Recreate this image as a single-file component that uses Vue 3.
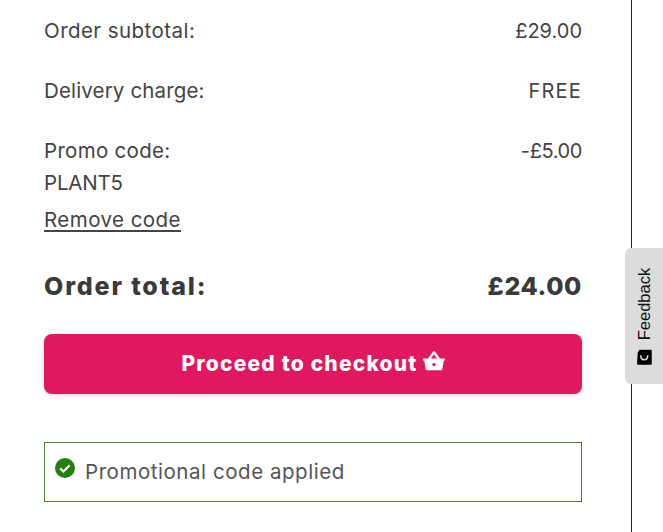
<template>
  <div class="page">
    <main class="panel">
      <div class="row first"><span class="label subtotal">Order subtotal:</span><span class="amount">£29.00</span></div>
      <div class="row"><span class="label delivery">Delivery charge:</span><span class="amount free">FREE</span></div>
      <div class="row promo">
        <div class="promo-info">
          <span class="label">Promo code:</span>
          <span class="code">PLANT5</span>
          <a class="label remove">Remove code</a>
        </div>
        <span class="amount discount">-£5.00</span>
      </div>
      <div class="row total"><span class="total-label">Order total:</span><span class="total-amount">£24.00</span></div>
      <button class="checkout">
        Proceed to checkout
        <svg class="basket" viewBox="0 0 22 20" width="22" height="20">
          <path fill="#fff" d="M0.8 7.6h4.3L9.7 0.9c.6-.9 2-.9 2.6 0l4.6 6.7h4.3c.5 0 .8.4.7.9l-.5 1.3c-.1.3-.4.5-.7.5h-.1l-1.2 7.5c-.1.9-.8 1.5-1.7 1.5H4.3c-.9 0-1.6-.6-1.7-1.5L1.4 10.4h-.1c-.3 0-.6-.2-.7-.5l-.5-1.3c-.1-.5.2-1 .7-1zM8 7.6h6L11 3.2z"/>
          <circle cx="11" cy="13.6" r="1.7" fill="#e0185f"/>
        </svg>
      </button>
      <div class="alert">
        <svg class="check" viewBox="0 0 20 20" width="20" height="20">
          <circle cx="10" cy="10" r="10" fill="#238010"/>
          <path d="M5.2 10.4l3.2 3.1 6.3-6.3" fill="none" stroke="#fff" stroke-width="2.2"/>
        </svg>
        <span>Promotional code applied</span>
      </div>
    </main>
    <aside class="feedback">
      <span class="feedback-inner">
        <svg class="fb-icon" viewBox="0 0 16 16" width="16" height="16">
          <path fill="#000" d="M3 0.5h12.5v13.7c0 .7-.6 1.3-1.3 1.3H2c-.7 0-1.2-.6-1.2-1.3L1.5 3.5z"/>
          <path d="M4.5 6c0 6 7 6 7 0" fill="none" stroke="#ddd" stroke-width="1.5"/>
        </svg>
        <span>Feedback</span>
      </span>
    </aside>
  </div>
</template>

<script setup>
</script>

<style>
html, body { margin: 0; background: #fff; }
</style>

<style scoped>
.page {
  position: relative;
  width: 663px;
  height: 532px;
  overflow: hidden;
  background: #fff;
  font-family: "Inter", "Noto Sans", sans-serif;
  color: #444;
}
.panel {
  box-sizing: border-box;
  width: 632px;
  height: 532px;
  padding: 0 49px 0 44px;
  border-right: 1px solid #222;
  font-size: 20.5px;
  line-height: 30px;
}
.row {
  display: flex;
  justify-content: space-between;
  margin-bottom: 30px;
}
.row.first { padding-top: 16px; }
.row.promo { margin-bottom: 0; }
.label { letter-spacing: .3px; }
.subtotal { letter-spacing: .45px; }
.delivery { letter-spacing: .15px; }
.amount { font-size: 20px; }
.free { letter-spacing: 1.2px; }
.discount { letter-spacing: -.4px; }
.promo-info { display: flex; flex-direction: column; }
.code { margin-top: 2px; letter-spacing: -.2px; }
.remove { margin-top: 7px; letter-spacing: .45px; text-decoration: underline; text-underline-offset: 3px; }
.row.total {
  margin: 36px 0 33px;
  font-size: 25px;
  font-weight: 800;
  color: #3a3a3a;
}
.total-label { letter-spacing: 1.85px; }
.total-amount { letter-spacing: .6px; }
.checkout {
  display: flex;
  align-items: center;
  justify-content: center;
  gap: 5px;
  box-sizing: border-box;
  width: 100%;
  height: 60px;
  padding: 0 0 2px;
  border: 0;
  border-radius: 8px;
  background: #e0185f;
  box-shadow: 0 1px 3px rgba(0,0,0,.2);
  color: #fff;
  font: 800 21px "Inter", sans-serif;
  letter-spacing: 1.2px;
}
.basket { margin-bottom: 4px; }
.alert {
  display: flex;
  align-items: center;
  gap: 10px;
  box-sizing: border-box;
  height: 60px;
  margin-top: 48px;
  padding-left: 10px;
  border: 1px solid #4f7f2a;
  color: #555;
  letter-spacing: .55px;
}
.check { margin-top: -8px; }
.feedback {
  position: absolute;
  top: 248px;
  right: 0;
  width: 38px;
  height: 136px;
  border-radius: 6px 0 0 6px;
  background: #dcdcdc;
  display: flex;
  align-items: center;
  justify-content: center;
}
.feedback-inner {
  display: flex;
  align-items: center;
  gap: 9px;
  transform: translateX(1px) rotate(-90deg);
  white-space: nowrap;
  font: 16.5px "Liberation Sans", sans-serif;
  color: #111;
}
.fb-icon { transform: translateY(-1px) rotate(90deg); }
</style>
